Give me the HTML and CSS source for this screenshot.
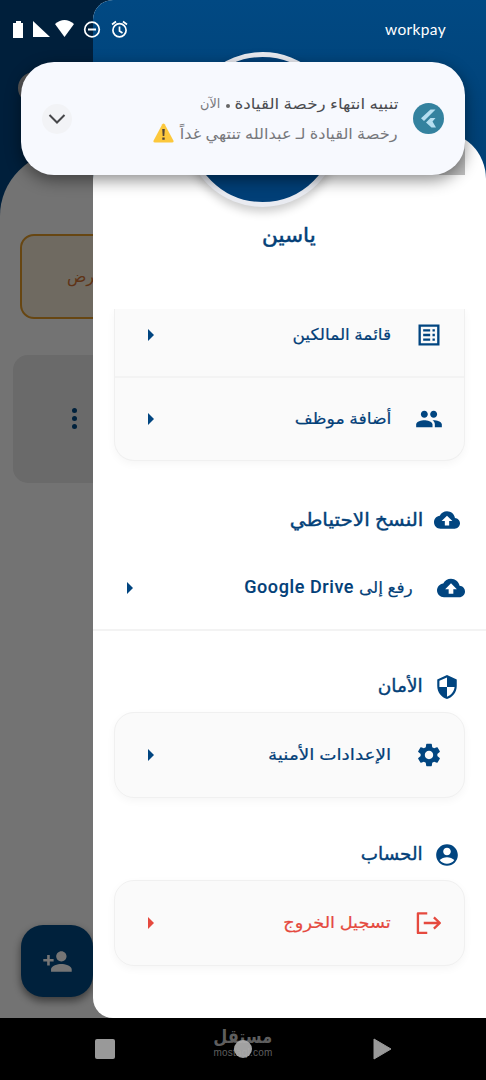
FILE: index.html
```html
<!DOCTYPE html>
<html lang="ar" dir="rtl">
<head>
<meta charset="utf-8">
<title>workpay</title>
<link rel="stylesheet" href="styles.css">
</head>
<body>
<svg class="defs" width="0" height="0">
  <symbol id="arrow" viewBox="0 0 6 12"><path d="M0 0l6 6-6 6z"/></symbol>
  <symbol id="cloud" viewBox="0 0 24 24"><path d="M19.35 10.04C18.67 6.59 15.64 4 12 4 9.11 4 6.6 5.64 5.35 8.04 2.34 8.36 0 10.91 0 14c0 3.31 2.69 6 6 6h13c2.76 0 5-2.24 5-5 0-2.64-2.05-4.78-4.65-4.96zM14 13v4h-4v-4H7l5-5 5 5h-3z"/></symbol>
</svg>
<div class="screen">
  <main class="page">
    <div class="page-top"><span class="page-dot"></span></div>
    <div class="page-body">
      <div class="notice"><span class="notice-text">ـرض</span></div>
      <div class="record"><i></i><i></i><i></i></div>
      <div class="fab">
        <svg width="31" height="31" viewBox="0 0 24 24"><path d="M15 12c2.21 0 4-1.79 4-4s-1.79-4-4-4-4 1.79-4 4 1.79 4 4 4zm-9-2V7H4v3H1v2h3v3h2v-3h3v-2H6zm9 4c-2.67 0-8 1.34-8 4v2h16v-2c0-2.66-5.33-4-8-4z"/></svg>
      </div>
    </div>
  </main>
  <div class="scrim"></div>

  <aside class="drawer">
    <header class="profile">
      <div class="sheet"></div>
      <div class="avatar"></div>
      <h1 class="name"><span class="t t-name">ياسين</span></h1>
    </header>
    <div class="menu">
      <div class="card card-cut">
        <div class="row">
          <svg class="icon" viewBox="0 0 24 24"><path fill-rule="evenodd" d="M3 3h18v18H3zM5 5v14h14V5zM7 7h6v2H7zM7 11h6v2H7zM7 15h6v2H7zM15 7h2v2h-2zM15 11h2v2h-2zM15 15h2v2h-2z"/></svg>
          <span class="label"><span class="t t-owners">قائمة المالكين</span></span><svg class="arrow"><use href="#arrow"/></svg>
        </div>
        <div class="row">
          <svg class="icon" viewBox="0 0 24 24"><path d="M16 11c1.66 0 2.99-1.34 2.99-3S17.66 5 16 5c-1.66 0-3 1.34-3 3s1.34 3 3 3zm-8 0c1.66 0 2.99-1.34 2.99-3S9.66 5 8 5C6.34 5 5 6.34 5 8s1.34 3 3 3zm0 2c-2.33 0-7 1.17-7 3.5V19h14v-2.500C15 14.170 10.330 13 8 13zm8 0c-.29 0-.62.02-.97.05 1.160.840 1.970 1.970 1.970 3.450V19h6v-2.500c0-2.330-4.670-3.500-7-3.500z"/></svg>
          <span class="label"><span class="t t-add">أضافة موظف</span></span><svg class="arrow"><use href="#arrow"/></svg>
        </div>
      </div>

      <h2 class="section section-backup"><svg class="icon-s"><use href="#cloud"/></svg><span class="t t-backup">النسخ الاحتياطي</span></h2>
      <div class="row row-wide">
        <svg class="icon"><use href="#cloud"/></svg>
        <span class="label"><span class="t t-upload">رفع إلى</span> <span class="latin" dir="ltr">Google Drive</span></span><svg class="arrow"><use href="#arrow"/></svg>
      </div>

      <h2 class="section section-security"><svg class="icon-s" viewBox="0 0 24 24"><path d="M12 1L3 5v6c0 5.55 3.840 10.740 9 12 5.160-1.260 9-6.450 9-12V5l-9-4zm0 10.990h7c-.53 4.120-3.280 7.790-7 8.940V12H5V6.300l7-3.110v8.800z"/></svg><span class="t t-security">الأمان</span></h2>
      <div class="card">
        <div class="row">
          <svg class="icon" viewBox="0 0 24 24"><path d="M19.140 12.940c.04-.3.060-.61.060-.94 0-.32-.02-.64-.07-.94l2.030-1.580c.18-.14.230-.41.120-.61l-1.920-3.320c-.12-.22-.37-.29-.59-.22l-2.390.960c-.5-.38-1.030-.7-1.620-.94l-.36-2.540c-.04-.24-.24-.41-.48-.41h-3.840c-.24 0-.43.170-.47.410l-.36 2.540c-.59.240-1.130.570-1.620.940l-2.390-.96c-.22-.08-.47 0-.59.220L2.740 8.870c-.12.210-.08.470.120.610l2.030 1.580c-.05.300-.09.630-.09.940s.02.640.070.940l-2.030 1.580c-.18.140-.23.410-.12.610l1.920 3.320c.12.220.370.290.590.220l2.390-.96c.5.380 1.030.7 1.620.940l.36 2.540c.05.240.240.410.480.410h3.840c.24 0 .44-.17.470-.41l.36-2.540c.59-.24 1.130-.56 1.620-.94l2.390.960c.22.080.470 0 .59-.22l1.920-3.320c.12-.22.070-.47-.12-.61l-2.010-1.580zM12 15.600c-1.980 0-3.600-1.620-3.600-3.600s1.620-3.600 3.600-3.600 3.600 1.620 3.600 3.600-1.620 3.600-3.600 3.600z"/></svg>
          <span class="label"><span class="t t-settings">الإعدادات الأمنية</span></span><svg class="arrow"><use href="#arrow"/></svg>
        </div>
      </div>

      <h2 class="section section-account"><svg class="icon-s" viewBox="0 0 24 24"><path d="M12 2C6.480 2 2 6.480 2 12s4.480 10 10 10 10-4.480 10-10S17.520 2 12 2zm0 3.200c1.960 0 3.500 1.540 3.500 3.500s-1.540 3.500-3.500 3.500-3.500-1.540-3.500-3.500 1.540-3.500 3.500-3.500zm0 14.900c-2.500 0-5.100-1.100-6.800-3.400C6.900 14.900 9.400 14 12 14s5.100.9 6.800 2.700c-1.700 2.300-4.300 3.400-6.800 3.400z"/></svg><span class="t t-account">الحساب</span></h2>
      <div class="card">
        <div class="row danger">
          <svg class="icon" viewBox="0 0 24 24"><path class="stroke" d="M10.500 3.700H2.500v16.800H10.500M7.500 12h13.500M16.200 7.200l5.100 4.800-5.100 4.800"/></svg>
          <span class="label"><span class="t t-logout">تسجيل الخروج</span></span><svg class="arrow"><use href="#arrow"/></svg>
        </div>
      </div>
    </div>
  </aside>

  <div class="status" dir="ltr">
    <div class="status-icons">
      <svg width="112" height="20" viewBox="0 0 112 20" fill="#fff">
        <path d="M4 1h5v2h2v15H1V3h3z"/>
        <path d="M21 1v16h17z"/>
        <path d="M43 4q9.500-8 19 0l-9.500 13z"/>
        <circle cx="80" cy="9.500" r="7.300" fill="none" stroke="#fff" stroke-width="1.700"/><path d="M76 8.500h8v2h-8z"/>
        <g fill="none" stroke="#fff" stroke-width="1.700"><circle cx="107.500" cy="10.300" r="6.600"/><path d="M107.500 6.500v4.500l3 2M100 4.500l4-3M115 4.500l-4-3"/></g>
      </svg>
    </div>
    <span class="brand">workpay</span>
  </div>

  <div class="toast-wrap">
    <div class="toast">
      <div class="toast-icon"><svg width="31" height="31" viewBox="0 0 31 31"><circle cx="15.500" cy="15.500" r="15.500" fill="#34829f"/><path d="M17.500 6.500h5L11 18l-3-2.700zM17.500 15h5L19.500 18.500l3.500 6h-4.500L13 19.500z" fill="#b5def0"/></svg></div>
      <div class="toast-copy">
        <div class="toast-line"><span class="t t-title">تنبيه انتهاء رخصة القيادة</span><b class="sep"></b><span class="t t-now">الآن</span></div>
        <div class="toast-line toast-body"><span class="t t-msg">رخصة القيادة لـ عبدالله تنتهي غداً</span>
          <svg class="warn" width="21" height="20" viewBox="0 0 21 20"><path d="M9.300 1.200q1.200-1.600 2.400 0l8.800 16.600q.5 1.700-1.500 1.700H2q-2 0-1.500-1.700z" fill="#fcc83c"/><path d="M9.200 6h2.600l-.5 7H9.700zM9.300 14.500h2.400v2.300H9.300z" fill="#514438"/></svg>
        </div>
      </div>
      <div class="expand"><svg width="18" height="12" viewBox="0 0 18 12"><path d="M1.500 2l7.500 7.500L16.500 2" fill="none" stroke="#464649" stroke-width="2"/></svg></div>
    </div>
  </div>

  <nav class="navbar" dir="ltr">
    <span class="nav-square"></span>
    <div class="home"><div class="mark"><span class="mark-ar">مستقل</span><span class="mark-en">mostaql.com</span></div><span class="nav-circle"></span></div>
    <svg class="nav-play" width="19" height="22" viewBox="0 0 19 22"><path d="M1 1l17 10L1 21z" fill="#999" stroke="#999" stroke-linejoin="round"/></svg>
  </nav>
</div>
</body>
</html>
```
FILE: styles.css
```css
* { box-sizing: border-box; }
body { margin: 0; font-family: "Noto Sans", "DejaVu Sans", sans-serif; color: #034078; }
h1, h2 { margin: 0; font-weight: 400; }
svg { display: block; flex: none; }
.defs { position: absolute; }
.screen { position: relative; width: 486px; height: 1080px; overflow: hidden; background: #000; display: flex; flex-direction: column; }
.t { display: inline-block; white-space: nowrap; transform-origin: right center; }

.page { height: 1018px; background: #014580; direction: ltr; }
.page-top { height: 152px; padding: 72px 0 0 18px; }
.page-dot { display: block; width: 32px; height: 32px; border-radius: 50%; background: #bbb; }
.page-body { height: 866px; border-radius: 64px 64px 0 0; background: #fbfbfb; padding-top: 82px; }
.notice { width: 440px; height: 85px; margin-left: 20px; border: 2px solid #e09a28; border-radius: 14px; background: #f1e6d4; padding: 29px 0 0 45px; font-size: 16px; color: #d07030; }
.record { width: 460px; height: 128px; margin: 36px 0 0 13px; border-radius: 15px; background: #e6e6e6; padding: 53px 0 0 59px; display: flex; flex-direction: column; gap: 3px; }
.record i { width: 5px; height: 5px; border-radius: 50%; background: #014983; }
.fab { width: 72px; height: 72px; margin: 442px 0 0 21px; border-radius: 22px; background: #014983; fill: #fff; box-shadow: 0 4px 9px rgba(0,0,0,.5); display: flex; align-items: center; justify-content: center; }
.scrim { position: absolute; inset: 0 0 62px; background: rgba(0,0,0,.54); }

.drawer { position: absolute; top: 0; left: 93px; width: 393px; height: 1018px; background: #fff; border-radius: 20px 0 0 20px; overflow: hidden; }
.profile { height: 309px; padding-top: 131px; background: linear-gradient(#014983, #013f73 190px); position: relative; }
.sheet { height: 178px; background: #fff; border-radius: 48px 48px 0 0; }
.avatar { position: absolute; left: 92px; top: 52px; width: 155px; height: 155px; border: 5px solid #e9ebf1; border-radius: 50%; background: #013f77; box-shadow: 0 5px 10px rgba(0,0,0,.2); }
.name { position: absolute; top: 217px; right: 170px; font-size: 20px; line-height: 36px; -webkit-text-stroke: .5px; }
.t-name { transform: scaleX(1.08); }
.menu { height: 709px; overflow: hidden; }
.card { margin: 0 21px; width: 351px; border: 1px solid #f0f0f0; border-radius: 20px; background: #fafafa; box-shadow: 0 3px 8px rgba(0,0,0,.04); }
.card-cut { border-radius: 0 0 20px 20px; border-top: 0; height: 152px; }
.row { height: 84px; display: flex; align-items: center; padding: 0 21px 0 36px; color: #034078; direction: rtl; }
.card-cut .row:first-child { height: 69px; padding-bottom: 16px; border-bottom: 2px solid #f3f3f3; }
.card-cut .row:last-child { height: 82px; }
.icon { width: 28px; height: 28px; fill: #014580; }
.icon-s { width: 26px; height: 26px; fill: #014580; }
.stroke { fill: none; stroke: #e5493e; stroke-width: 2; stroke-linejoin: round; }
.label { margin-right: 24px; font-size: 16px; flex: 1; -webkit-text-stroke: .2px; position: relative; top: -1px; }
.t-owners { transform: scaleX(1.06); }
.t-add { transform: scaleX(1.08); }
.t-settings { transform: scaleX(1.15); }
.t-logout { transform: scaleX(1.11); }
.t-upload { transform: scaleX(1.06); margin-left: 4px; }
.arrow { width: 6px; height: 12px; fill: #014580; margin-left: -3px; }
.section { display: flex; align-items: center; gap: 11px; padding-right: 26px; height: 30px; font-size: 18px; -webkit-text-stroke: .4px; }
.section .t { position: relative; top: -2px; }
.section .t-backup { transform: scaleX(1.11); top: -1px; }
.t-security { transform: scaleX(1.03); }
.t-account { transform: scaleX(1.02); }
.section-backup { margin-top: 44px; }
.row-wide { margin-top: 11px; height: 85px; padding-left: 37px; border-bottom: 2px solid #f3f3f3; }
.latin { font: 500 18px Roboto, sans-serif; letter-spacing: .6px; display: inline-block; -webkit-text-stroke: .1px; }
.section-security { margin: 41px 0 10px; }
.section-account { margin: 42px 0 10px; }
.danger { color: #e5493e; }
.danger .arrow { fill: #e5493e; }

.status { position: absolute; top: 20px; left: 12px; right: 40px; display: flex; justify-content: space-between; color: #fff; }
.status-icons svg { overflow: visible; }
.brand { font: 15.5px/19px Lato, sans-serif; letter-spacing: .35px; }

.toast-wrap { position: absolute; left: 21px; top: 62px; background: linear-gradient(rgba(0,0,0,.25), rgba(0,0,0,.25)) right bottom / 33px 33px no-repeat; }
.toast { width: 444px; height: 113px; border-radius: 33px; background: #f7f9fe; box-shadow: 0 5px 16px rgba(0,0,0,.45); display: flex; align-items: center; padding: 0 21px; }
.toast-copy { flex: 1; margin-right: 15px; padding-bottom: 2px; }
.toast-line { display: flex; align-items: center; height: 30px; font-size: 15px; color: #4b4c50; }
.toast-body { color: #77787c; }
.t-title { transform: scaleX(1.12); margin-left: 16px; }
.sep { width: 4px; height: 4px; border-radius: 50%; background: #666; margin: 6px 6px 0 5px; }
.t-msg { transform: scaleX(1.08); margin-left: 17px; }
.warn { margin-right: 5px; }
.t-now { font-size: 13.5px; color: #77787c; transform: scaleX(.95); }
.expand { width: 30px; height: 30px; border-radius: 50%; background: #f2f3f6; display: flex; align-items: center; justify-content: center; }

.navbar { height: 62px; display: flex; align-items: center; padding-left: 95px; }
.nav-square { width: 20px; height: 20px; border-radius: 2px; background: #999; }
.home { position: relative; width: 60px; height: 62px; margin-left: 98px; }
.nav-circle { position: absolute; left: 21px; top: 22px; width: 18px; height: 18px; border-radius: 50%; background: rgba(175,175,175,.92); }
.mark { display: flex; flex-direction: column; align-items: center; padding-top: 8px; color: #5e5e5e; }
.mark-ar { font-size: 19px; font-weight: 700; line-height: 21px; white-space: nowrap; transform: scaleX(.85); }
.mark-en { font: 10px/12px "Liberation Sans", sans-serif; letter-spacing: .2px; }
.nav-play { margin-left: 100px; }
```
